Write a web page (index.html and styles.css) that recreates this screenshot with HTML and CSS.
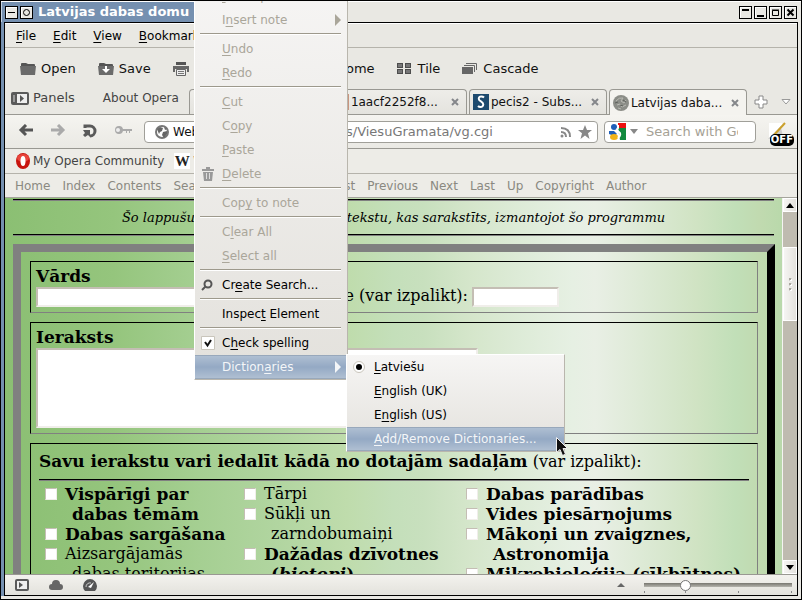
FILE: index.html
```html
<!DOCTYPE html>
<html lang="lv">
<head>
<meta charset="utf-8">
<title>Latvijas dabas domu</title>
<link rel="stylesheet" href="styles.css">
</head>
<body>
<div class="window">
  <header class="titlebar">
    <div class="title-active">
      <button class="wm" aria-label="Shade"><svg viewBox="0 0 9 9"><path d="M1 4.500h7" stroke="#000" fill="none"/></svg></button>
      <button class="wm" aria-label="Stick"><svg viewBox="0 0 9 9"><circle cx="4.500" cy="4.500" r="3" stroke="#000" fill="none"/></svg></button>
      <h1>Latvijas dabas domu</h1>
    </div>
    <div class="title-buttons">
      <button class="wm" aria-label="Roll up"><svg viewBox="0 0 9 9"><path d="M1 2h7" stroke="#000" stroke-width="2"/></svg></button>
      <button class="wm" aria-label="Minimize"><svg viewBox="0 0 9 9"><path d="M1 8h7" stroke="#000" stroke-width="2"/></svg></button>
      <button class="wm" aria-label="Maximize"><svg viewBox="0 0 9 9"><path d="M1.500 2.500h6v5h-6zM1 2h7" stroke="#000" fill="none"/></svg></button>
      <button class="wm" aria-label="Close"><svg viewBox="0 0 9 9"><path d="M1.500 1.500l6 6M7.500 1.500l-6 6" stroke="#000" stroke-width="2"/></svg></button>
    </div>
  </header>

  <div class="client">
    <nav class="menubar">
      <button><span><u>F</u>ile</span></button><button><span><u>E</u>dit</span></button><button><span><u>V</u>iew</span></button><button><span><u>B</u>ookmarks</span></button>
    </nav>

    <div class="toolbar">
      <button><svg class="ico" viewBox="0 0 16 16"><path d="M1 3q0-1 1-1h4l2 1h6q1 0 1 1v1H1z" fill="#555"/><path d="M0 5h16l-1 9H1z" fill="#6b6b6b"/></svg>Open</button>
      <button><svg class="ico" viewBox="0 0 16 16"><path d="M1 3q0-1 1-1h4l2 1h6q1 0 1 1v1H1z" fill="#555"/><path d="M0 5h16l-1 9H1z" fill="#6b6b6b"/><path d="M7 5h2v3h3l-4 4-4-4h3z" fill="#fff"/></svg>Save</button>
      <button><svg class="ico" viewBox="0 0 16 16"><path d="M3 1h10v3H3z" fill="#555"/><path d="M0 5h16v6h-2V8H2v3H0z" fill="#666"/><path d="M3.500 8.500h9v6h-9z" fill="#eee" stroke="#666"/><path d="M5 10.500h6M5 12.500h6" stroke="#777"/></svg>Print</button>
      <button><svg class="ico" viewBox="0 0 16 16"><circle cx="9" cy="6" r="4" fill="none" stroke="#555" stroke-width="2"/><path d="M6 9l-5 5" stroke="#555" stroke-width="2"/></svg>Find</button>
      <button><svg class="ico" viewBox="0 0 16 16"><path d="M0 8l8-7 8 7h-2v7H2V8z" fill="#666"/></svg>Home</button>
      <button><svg class="ico" viewBox="0 0 16 16"><path d="M0 2h6v5H0zM8 2h6v5H8zM0 8h6v5H0zM8 8h6v5H8z" fill="#4d4d4d"/><path d="M1 3h4v3H1zM9 3h4v3H9zM1 9h4v3H1zM9 9h4v3H9z" fill="#777"/></svg>Tile</button>
      <button><svg class="ico" viewBox="0 0 16 16"><path d="M0 6h11v7H0z" fill="#666"/><path d="M2 4.500h10.500V11M4 2.500h10.500V9" fill="none" stroke="#666"/></svg>Cascade</button>
    </div>

    <div class="tabrow">
      <button class="panels"><svg viewBox="0 0 18 13"><rect width="18" height="13" rx="2" fill="#5a5a5a"/><path d="M6 2h10v9H6z" fill="#eee"/><path d="M9 3v7l4-3.500z" fill="#555"/><path d="M2 3h2v7H2z" fill="#999"/></svg>Panels</button>
      <button class="about">About Opera</button>
      <div class="tabs">
        <div class="tab"><svg class="fav" viewBox="0 0 16 16"><path d="M4 2h8v12H4z" fill="#fff" stroke="#999"/></svg></div>
        <div class="tab"><svg class="fav" viewBox="0 0 16 16"><path d="M0 0h16v16H0z" fill="#c9957f"/></svg><span class="tab-name">1aacf2252f8...</span><button class="x" aria-label="Close tab"><svg viewBox="0 0 8 8"><path d="M1 1l6 6M7 1L1 7"/></svg></button></div>
        <div class="tab"><svg class="fav" viewBox="0 0 16 16"><path d="M0 0h16v16H0z" fill="#1d4a6e"/><path d="M11 3.500Q10 2.500 8.300 2.500 5.500 2.500 5.800 5C6 7.500 10.400 7.500 10.300 10.500Q10 13 7.500 13 6 13 5 12" fill="none" stroke="#fff" stroke-width="2"/></svg><span class="tab-name">pecis2 - Subs...</span><button class="x" aria-label="Close tab"><svg viewBox="0 0 8 8"><path d="M1 1l6 6M7 1L1 7"/></svg></button></div>
        <div class="tab active"><svg class="fav" viewBox="0 0 16 16"><circle cx="8" cy="8" r="8" fill="#8b8d87"/><path d="M3 6q3-4 7-3l-2 3 3 2 2-3M4 10l3-1 2 3 4-2M5 13l3 1" fill="none" stroke="#b9bab3"/><path d="M2 8l3-1M10 5l3 2M7 10l3 1" stroke="#5e615c"/></svg><span class="tab-name">Latvijas daba...</span><button class="x" aria-label="Close tab"><svg viewBox="0 0 8 8"><path d="M1 1l6 6M7 1L1 7"/></svg></button></div>
      </div>
      <button class="newtab" aria-label="New tab"><svg viewBox="0 0 14 14"><path d="M5 1h4v4h4v4H9v4H5V9H1V5h4z" fill="#fff" stroke="#888"/></svg></button>
      <button class="closed" aria-label="Closed tabs"><svg viewBox="0 0 10 8"><path d="M1 1.500h8L5 6z" fill="#fff" stroke="#999"/></svg></button>
    </div>

    <div class="addressbar">
      <button aria-label="Back"><svg viewBox="0 0 16 16"><path d="M15 6H4M8 1L3 6l5 5" fill="none" stroke="#555" stroke-width="3"/></svg></button>
      <button aria-label="Forward"><svg viewBox="0 0 16 16"><path d="M1 6h11M8 1l5 5-5 5" fill="none" stroke="#aaa" stroke-width="3"/></svg></button>
      <button aria-label="Reload"><svg viewBox="0 0 16 16"><path d="M3 4V2h5a5 5 0 0 1 0 10" fill="none" stroke="#5a5a5a" stroke-width="3"/><path d="M1 6h7v7l-2-2-3 2-2-2 2-2z" fill="#5a5a5a"/></svg></button>
      <button aria-label="Wand" class="key"><svg viewBox="0 0 18 12"><path d="M5 0a4 4 0 1 0 0 8 4 4 0 0 0 4-3h9V3H9a4 4 0 0 0-4-3z" fill="#aaa"/><circle cx="4" cy="4" r="2" fill="#eee"/><path d="M12.500 5v2M15.500 5v2" stroke="#aaa"/></svg></button>
      <div class="field url">
        <svg class="globe" viewBox="0 0 14 14"><circle cx="7" cy="7" r="6" fill="#fff" stroke="#777" stroke-width="2"/><path d="M2 4l3-2 3 1-1 3-2 1-1 2zM8 7l4-1v3l-3 4-2-3zM9 2l3 2-2 1z" fill="#666"/></svg>
        <span class="badge">Web</span>
        <input type="text" aria-label="Address" value="s/ViesuGramata/vg.cgi">
        <svg class="rss" viewBox="0 0 12 12"><path d="M1 6q5 0 5 5M1 2q9 0 9 9" fill="none" stroke="#888" stroke-width="2"/><circle cx="2" cy="10" r="1.500" fill="#888"/></svg>
        <svg class="star" viewBox="0 0 14 14"><path d="M7 0l2 5h5l-4 3.300L11.500 14 7 10.500 2.500 14 4 8.300 0 5h5z" fill="#888"/></svg>
      </div>
      <div class="field search">
        <svg class="goog" viewBox="0 0 17 17"><path d="M9 0h8v5H9z" fill="#e11"/><path d="M9 5h8v12h-6z" fill="#128a3e"/><circle cx="5" cy="4" r="3" fill="#1f5fb8"/><path d="M0 8h5l3 3-3 2-5-2z" fill="#1f5fb8"/><ellipse cx="5" cy="14" rx="4" ry="3" fill="#f0b418"/><path d="M9 2v3q-2 2 1 4t-1 6" fill="none" stroke="#fff" stroke-width="2"/></svg>
        <svg class="drop" viewBox="0 0 8 5"><path d="M0 0h8L4 5z" fill="#888"/></svg>
        <input type="text" aria-label="Search" placeholder="Search with Google">
      </div>
      <button class="off" aria-label="Block off"><svg viewBox="0 0 26 24"><path d="M1 3h13v14H1z" fill="#fff"/><path d="M0 19L13 6l2 12z" fill="#ccc"/><path d="M17 3L6 15" stroke="#caa02c" stroke-width="2"/></svg><b>OFF</b></button>
    </div>

    <nav class="bookmarks">
      <a href="#"><svg viewBox="0 0 14 16"><ellipse cx="7" cy="8" rx="7" ry="8" fill="#c8140e"/><ellipse cx="7" cy="5" rx="6" ry="4" fill="#e8453c"/><ellipse cx="7" cy="8" rx="2.500" ry="5" fill="#fff"/></svg>My Opera Community</a>
      <a href="#"><i class="wiki">W</i>Wikipedia</a>
    </nav>

    <nav class="links">
      <a href="#">Home</a><a href="#">Index</a><a href="#">Contents</a><a href="#">Search</a><a href="#">Glossary</a><a href="#">Help</a><a href="#">First</a><a href="#">Previous</a><a href="#">Next</a><a href="#">Last</a><a href="#">Up</a><a href="#">Copyright</a><a href="#">Author</a>
    </nav>

    <main class="viewport">
      <div class="page">
        <hr>
        <p class="intro">Šo lappušu autors neatbild par to tekstu, kas sarakstīts, izmantojot šo programmu</p>
        <hr>
        <form class="book">
          <section class="box name">
            <label class="strong" for="name">Vārds</label>
            <div class="name-row">
              <input id="name" type="text">
              <label for="mail">Adrese (var izpalikt):</label>
              <input id="mail" type="text">
            </div>
          </section>
          <section class="box">
            <label class="strong" for="entry">Ieraksts</label>
            <textarea id="entry"></textarea>
          </section>
          <section class="box topics">
            <p><b>Savu ierakstu vari iedalīt kādā no dotajām sadaļām</b> (var izpalikt):</p>
            <hr>
            <div class="cols">
              <div class="narrow">
                <label><input type="checkbox"><b>Vispārīgi par dabas tēmām</b></label>
                <label><input type="checkbox"><b>Dabas sargāšana</b></label>
                <label><input type="checkbox"><span>Aizsargājamās dabas teritorijas</span></label>
              </div>
              <div class="middle">
                <label><input type="checkbox"><span>Tārpi</span></label>
                <label><input type="checkbox"><span>Sūkļi un zarndobumaiņi</span></label>
                <label><input type="checkbox"><b>Dažādas dzīvotnes (<i>biotopi</i>)</b></label>
              </div>
              <div>
                <label><input type="checkbox"><b>Dabas parādības</b></label>
                <label><input type="checkbox"><b>Vides piesārņojums</b></label>
                <label><input type="checkbox"><b>Mākoņi un zvaigznes, Astronomija</b></label>
                <label><input type="checkbox"><b>Mikrobioloģija (sīkbūtnes)</b></label>
              </div>
            </div>
          </section>
        </form>
      </div>
      <div class="scroll">
        <button aria-label="Scroll up"><svg viewBox="0 0 8 5"><path d="M0 5h8L4 0z"/></svg></button>
        <div class="thumb"><i></i><i></i><i></i></div>
        <button aria-label="Scroll down"><svg viewBox="0 0 8 5"><path d="M0 0h8L4 5z"/></svg></button>
      </div>
    </main>

    <footer class="status">
      <button aria-label="Panels"><svg viewBox="0 0 14 12"><rect x="1" y="1" width="12" height="10" rx="1" fill="#eee" stroke="#5a5a5a" stroke-width="2"/><path d="M4 3v6l4-3z" fill="#555"/></svg></button>
      <button aria-label="Link"><svg viewBox="0 0 14 12"><path d="M3 11a3 3 0 0 1 0-6 4 4 0 0 1 8 0 3 3 0 0 1 0 6z" fill="#666"/></svg></button>
      <button aria-label="Turbo"><svg viewBox="0 0 14 12"><path d="M2 12a7 7 0 1 1 10 0z" fill="#555"/><path d="M3 8a4 4 0 0 1 5-4" fill="none" stroke="#ccc"/><path d="M11 3L8 9 5 8z" fill="#fff"/></svg></button>
      <svg class="up" viewBox="0 0 8 4"><path d="M0 4h8L4 0z" fill="#666"/></svg>
      <div class="zoom">
        <input type="range" aria-label="Zoom" min="0" max="100" value="26">
        <div class="ticks"><i></i><i></i><i></i><i></i></div>
      </div>
    </footer>
  </div>

  <div class="menu context" role="menu">
    <button disabled><span><u>I</u>nsert personal</span></button>
    <button disabled><span>I<u>n</u>sert note</span><svg class="arrow" viewBox="0 0 6 12"><path d="M0 0l6 6-6 6z"/></svg></button>
    <hr>
    <button disabled><span><u>U</u>ndo</span></button>
    <button disabled><span><u>R</u>edo</span></button>
    <hr>
    <button disabled><span><u>C</u>ut</span></button>
    <button disabled><span>C<u>o</u>py</span></button>
    <button disabled><span><u>P</u>aste</span></button>
    <button disabled><svg class="mark" viewBox="0 0 14 14"><path d="M1 3h12M5 1h4" stroke="#999" stroke-width="2"/><path d="M2 5h10l-1 9H3z" fill="#999"/><path d="M5.500 6v6M8.500 6v6" stroke="#ddd"/></svg><span><u>D</u>elete</span></button>
    <hr>
    <button disabled><span>Cop<u>y</u> to note</span></button>
    <hr>
    <button disabled><span>C<u>l</u>ear All</span></button>
    <button disabled><span><u>S</u>elect all</span></button>
    <hr>
    <button><svg class="mark" viewBox="0 0 14 14"><circle cx="7" cy="6" r="3.500" fill="none" stroke="#555" stroke-width="2"/><path d="M4.500 8.500L1 12" stroke="#555" stroke-width="2"/></svg><span>Cr<u>e</u>ate Search...</span></button>
    <hr>
    <button><span>Inspec<u>t</u> Element</span></button>
    <hr>
    <button><svg class="mark" viewBox="0 0 14 14"><path d="M.5.5h13v13H.5z" fill="#fff" stroke="#c9c5bb"/><path d="M4 6l2.500 3.500L10 4" fill="none" stroke="#111" stroke-width="2"/></svg><span>C<u>h</u>eck spelling</span></button>
    <button class="on"><span>Diction<u>a</u>ries</span><svg class="arrow" viewBox="0 0 6 12"><path d="M0 0l6 6-6 6z"/></svg></button>
  </div>

  <div class="menu sub" role="menu">
    <button><svg class="mark" viewBox="0 0 14 14"><circle cx="6" cy="7" r="5.500" fill="#fff" stroke="#c9c5bb"/><circle cx="6" cy="7" r="3" fill="#000"/></svg><span><u>L</u>atviešu</span></button>
    <button><span><u>E</u>nglish (UK)</span></button>
    <button><span>E<u>n</u>glish (US)</span></button>
    <button class="on"><span><u>A</u>dd/Remove Dictionaries...</span></button>
  </div>

  <svg class="pointer" viewBox="0 0 12 19"><path d="M.5.5v15l3.500-3 2.500 6 3-1.300L7 11.500h4.500z" fill="#111" stroke="#eee"/></svg>
</div>
</body>
</html>
```

FILE: styles.css
```css
* { box-sizing: border-box; }
body {
  margin: 0;
  font: 13px/16px "DejaVu Sans", sans-serif;
  color: #111;
}
button {
  font: inherit;
  color: inherit;
  background: none;
  border: 0;
  padding: 0;
  display: flex;
  align-items: center;
}
input { font: inherit; }
a { color: inherit; text-decoration: none; }
svg { display: block; flex: none; }
u { text-decoration-thickness: 1px; text-underline-offset: 2px; text-decoration-skip-ink: none; }

.window {
  position: relative;
  display: flex;
  flex-direction: column;
  height: 100vh;
  overflow: hidden;
  background: #e9e8e3;
  border: 1px solid #000;
}

.titlebar {
  display: flex;
  flex: none;
  justify-content: space-between;
  height: 21px;
  border-top: 1px solid #fff;
}
.title-active {
  display: flex;
  align-items: center;
  gap: 2px;
  width: 196px;
  padding-left: 3px;
  overflow: hidden;
  background: #7590b0;
  border-left: 1px solid #c5d3e4;
}
.title-active h1 {
  margin: 0 0 0 3px;
  font-size: 13px;
  color: #fff;
  white-space: nowrap;
}
.title-buttons { display: flex; align-items: center; gap: 2px; padding-right: 4px; }
.wm {
  width: 13px;
  height: 13px;
  padding: 1px;
  justify-content: center;
  background: #e9e8e3;
  border: 1px solid #000;
  box-shadow: inset 1px 1px #fff;
}
.wm svg { width: 9px; height: 9px; }

.client {
  display: flex;
  flex: 1;
  flex-direction: column;
  min-height: 0;
  margin: 0 3px 3px 3px;
  border: 1px solid #000;
  box-shadow: -3px 0 #7590b0;
}

.menubar {
  display: flex;
  flex: none;
  gap: 17px;
  height: 25px;
  padding: 0 11px;
  font-size: 12px;
  border-top: 1px solid #fff;
  border-bottom: 1px solid #b5b3ab;
  color: #000;
}

.toolbar {
  display: flex;
  flex: none;
  align-items: center;
  gap: 22px;
  height: 41px;
  padding: 0 15px;
}
.toolbar button { gap: 5px; }
.ico { width: 16px; height: 16px; }

.tabrow {
  display: flex;
  flex: none;
  height: 26px;
  padding-left: 6px;
  color: #444;
  border-bottom: 1px solid #999892;
}
.panels { gap: 4px; padding-bottom: 7px; }
.panels svg { width: 18px; height: 13px; }
.about { margin: 0 10px 0 28px; padding-bottom: 7px; font-size: 12px; white-space: nowrap; }
.tabs { display: flex; flex: none; gap: 2px; height: 26px; }
.tab {
  display: flex;
  align-items: center;
  gap: 2px;
  width: 138px;
  height: 25px;
  padding: 0 7px 0 3px;
  font-size: 12px;
  color: #111;
  background: linear-gradient(#eeede9, #e4e3de);
  border: 1px solid #999892;
  border-bottom: 0;
  border-radius: 4px 4px 0 0;
}
.tab:first-child { justify-content: center; }
.tab.active { height: 26px; background: #f4f3ef; }
.tab-name { flex: 1; white-space: nowrap; }
.fav { width: 16px; height: 16px; }
.x svg { width: 8px; height: 8px; fill: none; stroke: #85878b; stroke-width: 2; }
.newtab { margin-left: 7px; }
.newtab svg { width: 14px; height: 14px; }
.closed { margin-left: 13px; }
.closed svg { width: 10px; height: 8px; }

.addressbar {
  display: flex;
  flex: none;
  align-items: center;
  gap: 16px;
  height: 34px;
  padding: 0 3px 0 13px;
  background: linear-gradient(#f5f4f0, #eae9e4);
  border-bottom: 1px solid #999892;
}
.addressbar svg { width: 16px; height: 16px; }
.addressbar .key svg { width: 18px; height: 12px; }
.field {
  display: flex;
  align-items: center;
  height: 22px;
  background: #fff;
  border: 1px solid #a09f99;
  border-radius: 4px;
}
.field input {
  flex: 1;
  min-width: 0;
  padding: 0;
  color: #777;
  background: none;
  border: 0;
}
.field input::placeholder { color: #a5a195; opacity: 1; }
.url { flex: 1; margin: 0 -10px 0 -4px; padding: 0 5px 0 10px; }
.addressbar .globe { width: 14px; height: 14px; }
.badge { width: 173px; margin-left: 4px; font-size: 12px; }
.addressbar .rss { width: 12px; height: 12px; margin-right: 6px; }
.addressbar .star { width: 14px; height: 14px; }
.search { width: 152px; padding: 0 17px 0 4px; }
.addressbar .goog { width: 17px; height: 17px; }
.addressbar .drop { width: 8px; height: 5px; margin: 0 8px 0 4px; }
.off { position: relative; width: 26px; margin-left: -4px; }
.addressbar .off svg { width: 26px; height: 24px; }
.off b {
  position: absolute;
  right: 0;
  bottom: -2px;
  padding: 0 1px;
  font-size: 10px;
  line-height: 12px;
  color: #fff;
  background: #000;
  border-radius: 5px;
}

.bookmarks {
  display: flex;
  flex: none;
  gap: 10px;
  height: 25px;
  padding: 0 11px;
  font-size: 12px;
  color: #444;
  background: #edece7;
  border-bottom: 1px solid #b5b3ab;
}
.bookmarks a { display: flex; align-items: center; gap: 3px; white-space: nowrap; }
.bookmarks svg { width: 14px; height: 16px; }
.wiki {
  width: 16px;
  height: 16px;
  text-align: center;
  font: bold 15px/16px "Liberation Serif", serif;
  color: #222;
  background: #fff;
}

.links {
  display: flex;
  flex: none;
  align-items: center;
  gap: 12px;
  height: 24px;
  padding: 0 10px;
  font-size: 12px;
  color: #8a8981;
  background: #edece7;
  border-bottom: 1px solid #a5a49c;
}

.viewport { display: flex; flex: 1; min-height: 0; overflow: hidden; }
.page {
  flex: 1;
  min-width: 0;
  padding: 1px 8px 0;
  overflow: hidden;
  font: 16px/20px "DejaVu Serif", serif;
  color: #000;
  background: linear-gradient(90deg, #8bbf73 0%, #95c57d 14%, #a5cf92 25%, #b1d5a0 35%, #bfdcac 44%, #c4dfba 50%, #c8e0be 54%, #d5e6cb 60%, #ddebd7 66%, #e6f0e3 73%, #e9efe5 76%, #dbe9d3 83%, #d0e3c3 89%, #c1dfb8 94%, #c1dab0 97%, #b9d9ab 100%);
}
.page hr {
  height: 2px;
  margin: 0;
  border: 0;
  border-top: 1px solid #000;
  border-bottom: 1px solid #808080;
}
.page b, .box .strong { font-size: 17px; font-weight: bold; }
.intro {
  margin: 0;
  padding: 6px 0;
  text-align: center;
  font-size: 13px;
  line-height: 21px;
  font-style: italic;
  white-space: nowrap;
}
.book {
  display: flex;
  flex-direction: column;
  gap: 9px;
  margin: 8px -1px 0 0;
  padding: 9px;
  border: 8px solid;
  border-color: #808080 #000 #000 #808080;
}
.box {
  padding: 5px;
  border: 1px solid;
  border-color: #000 #808080 #808080 #000;
}
.box .strong { display: block; padding-bottom: 2px; line-height: 18px; }
.box input[type="text"], textarea {
  display: block;
  margin: 0;
  background: #fff;
  border: 2px solid;
  border-color: #c4beb4 #f0eeea #f0eeea #c4beb4;
}
.name-row { display: flex; gap: 4px; }
.name-row input { height: 20px; }
#name { width: 196px; }
.name-row label { width: 232px; text-align: right; line-height: 18px; }
#mail { width: 87px; }
textarea { width: 442px; height: 80px; resize: none; }

.topics { padding: 8px; }
.topics p { height: 20px; margin: 0 0 7px; line-height: 18px; }
.cols { display: grid; grid-template-columns: 199px 222px 1fr; padding: 3px 0 60px 6px; }
.cols label { display: flex; align-items: flex-start; gap: 8px; }
.cols b, .cols span { padding-left: 7px; text-indent: -7px; }
.narrow b, .narrow span { max-width: 168px; }
.middle b, .middle span { max-width: 186px; }
.cols input {
  flex: none;
  width: 12px;
  height: 12px;
  margin: 4px 0 0;
  appearance: none;
  background: #fff;
  border: 1px solid;
  border-color: #c4beb4 #f0eeea #f0eeea #c4beb4;
}

.scroll {
  display: flex;
  flex: none;
  flex-direction: column;
  width: 15px;
  background: #bfbbb0;
  border-left: 1px solid #f5f4f2;
}
.scroll button, .thumb {
  height: 14px;
  justify-content: center;
  background: linear-gradient(90deg, #f6f5f3, #e4e2dd);
  border: 1px solid #fff;
}
.scroll svg { width: 8px; height: 5px; }
.scroll button:last-child { margin-top: auto; }
.thumb {
  display: flex;
  flex-direction: column;
  align-items: center;
  gap: 2px;
  height: 74px;
  margin-top: 35px;
}
.thumb i { width: 3px; height: 3px; background: #aaa79f; border: 1px solid; border-color: #aaa79f #fff #fff #aaa79f; }

.status {
  display: flex;
  flex: none;
  align-items: center;
  gap: 20px;
  height: 21px;
  padding: 0 5px 0 10px;
  background: linear-gradient(#f3f2ee, #e3e2dc);
  border-top: 1px solid #999892;
}
.status button svg { width: 14px; height: 12px; }
.up { width: 8px; height: 4px; margin-left: auto; }
.zoom { width: 148px; margin-left: -1px; }
.zoom input {
  display: block;
  width: 100%;
  height: 12px;
  margin: 2px 0 0;
  appearance: none;
  background: linear-gradient(#77766f, #b5b4ad) center / 100% 4px no-repeat;
}
.zoom input::-webkit-slider-thumb {
  appearance: none;
  width: 11px;
  height: 11px;
  background: #fff;
  border: 1px solid #777;
  border-radius: 50%;
}
.ticks { display: grid; grid-template-columns: 41px 53px 53px 1px; }
.ticks i { width: 1px; height: 2px; background: #888; }

.menu {
  position: absolute;
  font-size: 12px;
  background: linear-gradient(#f6f5f4, #e3e1dc);
  border: 1px solid;
  border-color: #fff #b9b6ad #b9b6ad #fff;
  color: #000;
}
.menu button {
  display: grid;
  grid-template-columns: 27px 1fr 12px;
  width: 100%;
  height: 24px;
  text-align: left;
}
.menu button > span { grid-column: 2; grid-row: 1; white-space: nowrap; }
.menu button:disabled { color: #aaa69a; }
.menu .on {
  color: #f4f6f8;
  background: linear-gradient(#afbfd2, #94a9c4 50%, #afbfd2);
  border-top: 1px solid #98a8bb;
  border-bottom: 1px solid #98a8bb;
}
.menu hr {
  height: 2px;
  margin: 1px 6px 2px 5px;
  border: 0;
  border-top: 1px solid #9d998c;
  border-bottom: 1px solid #fff;
}
.mark { grid-column: 1; grid-row: 1; width: 14px; height: 14px; margin-left: 6px; }
.arrow { grid-column: 3; width: 6px; height: 12px; fill: currentColor; }
.context { left: 193px; top: -18px; width: 154px; }
.sub { left: 345px; top: 353px; width: 219px; }
.pointer { position: absolute; left: 555px; top: 436px; width: 12px; height: 19px; }
```
